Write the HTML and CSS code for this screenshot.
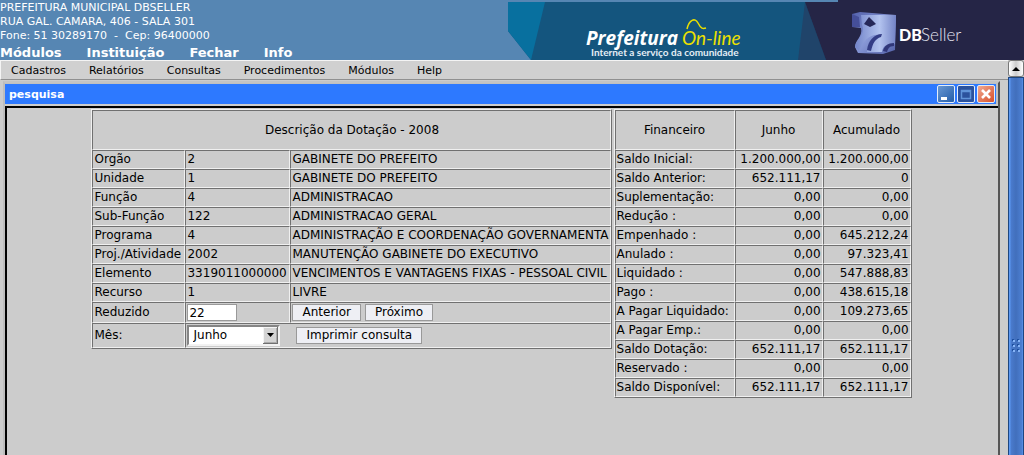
FILE: index.html
```html
<!DOCTYPE html>
<html lang="pt-BR">
<head>
<meta charset="utf-8">
<title>Prefeitura On-line</title>
<link rel="stylesheet" href="styles.css">
</head>
<body>
<header class="top">
  <div class="top-left">
    <address class="office">PREFEITURA MUNICIPAL DBSELLER<br>RUA GAL. CAMARA, 406 - SALA 301<br>Fone: 51 30289170 &nbsp;-&nbsp; Cep: 96400000</address>
    <nav class="main-nav"><a href="#">Módulos</a><a href="#">Instituição</a><a href="#">Fechar</a><a href="#">Info</a></nav>
  </div>
  <svg class="banner" viewBox="0 0 516 60" role="img" aria-label="Prefeitura On-line, DBSeller">
    <defs>
      <linearGradient id="cube" x1="0" y1="0" x2="1" y2="1"><stop offset="0" stop-color="#5260ab"/><stop offset=".5" stop-color="#8797d6"/><stop offset="1" stop-color="#5361a8"/></linearGradient>
      <linearGradient id="face" x1="0" y1="0" x2="1" y2="0"><stop offset="0" stop-color="#7284c9"/><stop offset=".6" stop-color="#b3c3ef"/><stop offset="1" stop-color="#7383c5"/></linearGradient>
    </defs>
    <path d="M0 2H330V60H23L0 31Z" fill="#14557e"/>
    <path d="M0 2H37L23 60L0 31Z" fill="#08709f"/>
    <path d="M297 2L318 60H290Z" fill="#20446a"/>
    <path d="M297 2H330V0H516V60H318Z" fill="#252546"/>
    <text class="brand" x="78" y="45">Prefeitura</text>
    <text class="brand-alt" x="174" y="45">On-line</text>
    <path d="M179 29C181 20 187 17 190 23S195 29 198 28" fill="none" stroke="#ece000" stroke-width="1.5"/>
    <text class="tagline" x="83" y="56">Internet a serviço da comunidade</text>
    <path d="M344 14L352 12L388 15L387 50L375 54L350 53L347 47C347 40 355 37 353 28L344 27Z" fill="url(#cube)"/>
    <path d="M353 15L388 15L387 44C379 43 375 46 374 52L359 52C359 44 364 37 373 35C362 33 355 41 351 51L347 47C350 37 358 34 354 25Z" fill="url(#face)"/>
    <path d="M361 17L368 24L362 27L356 24Z" fill="#262858"/>
    <path d="M359 50C360 41 366 34 374 34L373 37C367 39 365 43 363 51Z" fill="#343d86"/>
    <path d="M375 51C376 46 380 43 386 43L386 46C381 46 380 49 379 52Z" fill="#303779"/>
    <path d="M344 14L351 17L352 27L344 27Z" fill="#454f99"/>
    <text class="logo-bold" x="391" y="41">DB</text>
    <text class="logo-light" x="413" y="41">Seller</text>
  </svg>
</header>
<div class="shell">
  <main class="content">
    <nav class="menu"><a href="#">Cadastros</a><a href="#">Relatórios</a><a href="#">Consultas</a><a href="#">Procedimentos</a><a href="#">Módulos</a><a href="#">Help</a></nav>
    <section class="window">
      <div class="titlebar">
        <h1 class="title">pesquisa</h1>
        <button class="win-btn" type="button" aria-label="Minimizar"><svg viewBox="0 0 16 16"><path d="M3 11H9V14H3Z" fill="#fff"/></svg></button>
        <button class="win-btn win-max" type="button" aria-label="Maximizar"><svg viewBox="0 0 16 16"><path d="M3.500 4.500H12.500V12.500H3.500ZM3 5.500H13" fill="none" stroke="#5f93d8" stroke-width="1.500"/></svg></button>
        <button class="win-btn win-close" type="button" aria-label="Fechar janela"><svg viewBox="0 0 16 16"><path d="M4 4L12 12M12 4L4 12" stroke="#fff" stroke-width="2.600"/></svg></button>
      </div>
      <div class="pane">
        <table class="grid details">
          <colgroup><col class="c-name"><col class="c-code"><col class="c-text"></colgroup>
          <tr class="head"><td colspan="3">Descrição da Dotação - 2008</td></tr>
          <tr><td>Orgão</td><td>2</td><td>GABINETE DO PREFEITO</td></tr>
          <tr><td>Unidade</td><td>1</td><td>GABINETE DO PREFEITO</td></tr>
          <tr><td>Função</td><td>4</td><td>ADMINISTRACAO</td></tr>
          <tr><td>Sub-Função</td><td>122</td><td>ADMINISTRACAO GERAL</td></tr>
          <tr><td>Programa</td><td>4</td><td>ADMINISTRAÇÃO E COORDENAÇÃO GOVERNAMENTA</td></tr>
          <tr><td>Proj./Atividade</td><td>2002</td><td>MANUTENÇÃO GABINETE DO EXECUTIVO</td></tr>
          <tr><td>Elemento</td><td>3319011000000</td><td>VENCIMENTOS E VANTAGENS FIXAS - PESSOAL CIVIL</td></tr>
          <tr><td>Recurso</td><td>1</td><td>LIVRE</td></tr>
          <tr><td><label for="red">Reduzido</label></td><td><input class="field" id="red" type="text" value="22"></td><td><div class="actions"><button class="btn" type="button">Anterior</button><button class="btn" type="button">Próximo</button></div></td></tr>
          <tr><td><label for="mes">Mês:</label></td><td colspan="2"><div class="month"><span class="picker"><select id="mes"><option>Junho</option></select><svg class="arrow" viewBox="0 0 15 17" aria-hidden="true"><path d="M0 0H15V17H0Z" fill="#707070"/><path d="M0 0H14V16H0Z" fill="#f4f4f4"/><path d="M1 1H14V16H1Z" fill="#aaa"/><path d="M1 1H13V15H1Z" fill="#d4d4d4"/><path d="M4 6H11L7.500 10Z"/></svg></span><button class="btn" type="button">Imprimir consulta</button></div></td></tr>
        </table>
        <table class="grid finance">
          <colgroup><col class="c-item"><col class="c-value"><col class="c-value"></colgroup>
          <tr class="head"><th>Financeiro</th><th>Junho</th><th>Acumulado</th></tr>
          <tr><td>Saldo Inicial:</td><td>1.200.000,00</td><td>1.200.000,00</td></tr>
          <tr><td>Saldo Anterior:</td><td>652.111,17</td><td>0</td></tr>
          <tr><td>Suplementação:</td><td>0,00</td><td>0,00</td></tr>
          <tr><td>Redução :</td><td>0,00</td><td>0,00</td></tr>
          <tr><td>Empenhado :</td><td>0,00</td><td>645.212,24</td></tr>
          <tr><td>Anulado :</td><td>0,00</td><td>97.323,41</td></tr>
          <tr><td>Liquidado :</td><td>0,00</td><td>547.888,83</td></tr>
          <tr><td>Pago :</td><td>0,00</td><td>438.615,18</td></tr>
          <tr><td>A Pagar Liquidado:</td><td>0,00</td><td>109.273,65</td></tr>
          <tr><td>A Pagar Emp.:</td><td>0,00</td><td>0,00</td></tr>
          <tr><td>Saldo Dotação:</td><td>652.111,17</td><td>652.111,17</td></tr>
          <tr><td>Reservado :</td><td>0,00</td><td>0,00</td></tr>
          <tr><td>Saldo Disponível:</td><td>652.111,17</td><td>652.111,17</td></tr>
        </table>
      </div>
    </section>
  </main>
  <div class="scroll">
    <button class="scroll-up" type="button" aria-label="Rolar para cima"><svg viewBox="0 0 14 14"><path d="M3 9L7 5L11 9Z"/></svg></button>
    <div class="thumb"><svg class="grip" viewBox="0 0 9 13"><path d="M0 0H2V2H0ZM5 0H7V2H5ZM0 5H2V7H0ZM5 5H7V7H5ZM0 10H2V12H0ZM5 10H7V12H5Z" fill="#1e50a0"/><path d="M1 1H3V3H1ZM6 1H8V3H6ZM1 6H3V8H1ZM6 6H8V8H6ZM1 11H3V13H1ZM6 11H8V13H6Z" fill="#86b4f7"/></svg></div>
  </div>
</div>
</body>
</html>
```
FILE: styles.css
```css
* { box-sizing: border-box; }
body {
  margin: 0;
  height: 100vh;
  display: flex;
  flex-direction: column;
  overflow: hidden;
  background: #ccc;
  color: #000;
  font-family: "DejaVu Sans", sans-serif;
  font-size: 12px;
}
a { color: inherit; text-decoration: none; }
svg { display: block; }

.top { display: flex; justify-content: space-between; background: #5686b3; color: #fff; }
.top-left { padding-top: 1px; }
.office { font-size: 11px; font-style: normal; line-height: 14px; }
.main-nav { display: flex; gap: 25px; padding-top: 3px; font-size: 13px; font-weight: bold; line-height: 14px; white-space: nowrap; }
.banner { width: 516px; height: 60px; flex: none; }
.brand { font: italic bold 19px "Open Sans", sans-serif; fill: #fff; }
.brand-alt { font: italic 19px Lato, sans-serif; fill: #ece000; }
.tagline { font: bold 10px Lato, sans-serif; fill: #e4edf5; }
.logo-bold { font: 900 16px Lato, sans-serif; fill: #fff; }
.logo-light { font: 300 17px Lato, sans-serif; fill: #e4e4f0; }

.shell { flex: 1; min-height: 0; display: flex; }
.content { flex: 1; min-width: 0; display: flex; flex-direction: column; }
.menu {
  display: flex;
  gap: 23px;
  padding: 1px 10px 0;
  background: #d0d0d0;
  border: 1px solid #f4f4f4;
  border-bottom-color: #909090;
  border-right: 0;
  font-size: 11px;
  line-height: 17px;
}
.window {
  flex: 1;
  display: flex;
  flex-direction: column;
  margin: 1px 8px 0 3px;
  border: 2px solid #bdbdbd;
  border-top-color: #c4c4c4;
  border-right-color: #555;
  border-bottom: 0;
}
.titlebar {
  display: flex;
  align-items: center;
  gap: 2px;
  height: 21px;
  padding: 0 1px 0 4px;
  background: #2d79ff;
  border-right: 2px solid #c0c0c0;
  border-top: 1px solid #c0c0c0;
}
.title { flex: 1; margin: 0; color: #fff; font-size: 11px; }
.win-btn { width: 18px; height: 18px; padding: 0; border: 1px solid #e3edfa; border-radius: 2px; background: linear-gradient(135deg, #6998d3, #245da8); }
.win-max { background: #2b529d; }
.win-close { background: linear-gradient(135deg, #efaa92, #d94e28); }
.pane {
  flex: 1;
  display: flex;
  justify-content: center;
  align-items: flex-start;
  gap: 2px;
  margin-top: 2px;
  padding-top: 1px;
  padding-right: 2px;
  border-top: 2px solid #000;
  border-left: 2px solid #000;
}

.grid { border: 1px solid; border-color: #f0f0f0 #707070 #707070 #f0f0f0; border-spacing: 0; table-layout: fixed; line-height: 15px; white-space: nowrap; }
.grid td, .grid th { padding: 1px; border: 1px solid; border-color: #707070 #f0f0f0 #f0f0f0 #707070; font-weight: normal; }
.grid .head > * { height: 40px; text-align: center; }
.grid td:first-child { padding-right: 0; }
.details { width: 520px; }
.finance { width: 298px; }
.finance td + td { text-align: right; }
.c-name { width: 93px; }
.c-code { width: 105px; }
.c-text { width: 320px; }
.c-item { width: 120px; }
.c-value { width: 88px; }

.field { display: block; width: 50px; height: 17px; padding: 0 1px; border: 1px solid #999; background: #fff; font: inherit; color: #000; }
.btn { height: 17px; padding: 0 9px; border: 1px solid #999; background: #eeeff4; font: inherit; line-height: 15px; color: #000; }
.actions { display: flex; gap: 4px; }
.month { display: flex; align-items: center; gap: 16px; }
.picker { display: grid; width: 93px; height: 21px; border: 2px solid; border-color: #858585 #f2f2f2 #f2f2f2 #858585; background: #fff; }
.picker select, .arrow { grid-area: 1 / 1; }
.picker select { width: 100%; padding: 0 4px; border: 0; background: #fff; font: inherit; color: #000; appearance: none; }
.arrow { width: 15px; height: 17px; justify-self: end; pointer-events: none; }

.scroll { width: 16px; display: flex; flex-direction: column; }
.scroll-up { height: 17px; padding: 0; border: 1px solid #777; border-radius: 3px; background: linear-gradient(90deg, #fff, #ccc, #fff); }
.thumb { flex: 1; display: grid; justify-items: center; align-content: start; padding-top: 261px; border: 1px solid #1d4680; border-bottom: 0; background: linear-gradient(90deg, #5b98f2 0, #5b98f2 1px, #4a7bcd 2px, #416fbc 50%, #4c7fd2 13px, #5b98f2 14px); }
.grip { width: 9px; height: 13px; }
```
